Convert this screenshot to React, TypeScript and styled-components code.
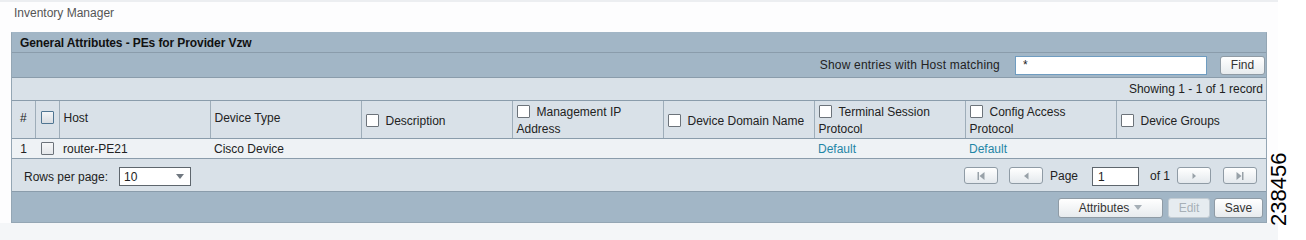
import React from 'react';
import styled, { createGlobalStyle } from 'styled-components';

const GlobalStyle = createGlobalStyle`
	html, body {
		margin: 0;
		padding: 0;
		background: #ffffff;
	}
	body {
		font-family: 'Liberation Sans', Arial, sans-serif;
		font-size: 12px;
		color: #222;
	}
`;

interface Column {
	label: string;
	width: number;
	check?: boolean;
}

const columns: Column[] = [
	{ label: 'Host', width: 151 },
	{ label: 'Device Type', width: 151 },
	{ label: 'Description', width: 151, check: true },
	{ label: 'Management IP Address', width: 151, check: true },
	{ label: 'Device Domain Name', width: 151, check: true },
	{ label: 'Terminal Session Protocol', width: 151, check: true },
	{ label: 'Config Access Protocol', width: 151, check: true },
	{ label: 'Device Groups', width: 150, check: true },
];

const rows = [
	{
		id: 1,
		cells: ['router-PE21', 'Cisco Device', '', '', '', 'Default', 'Default', ''],
	},
];

const PagerIcon: React.FC<{ kind: 'first' | 'prev' | 'next' | 'last' }> = ({ kind }) => {
	const fill = '#98a1a8';
	return (
		<svg width="10" height="10" viewBox="0 0 10 10">
			{kind === 'first' && (
				<>
					<rect x="1.5" y="1" width="1.5" height="8" fill={fill} />
					<path d="M8.5 1 L3.5 5 L8.5 9 Z" fill={fill} />
				</>
			)}
			{kind === 'prev' && <path d="M7.5 1.5 L3 5 L7.5 8.5 Z" fill={fill} />}
			{kind === 'next' && <path d="M3.5 2 L7 5 L3.5 8 Z" fill={fill} />}
			{kind === 'last' && (
				<>
					<path d="M1.5 1 L6.5 5 L1.5 9 Z" fill={fill} />
					<rect x="7" y="1" width="1.5" height="8" fill={fill} />
				</>
			)}
		</svg>
	);
};

const App: React.FC = (): JSX.Element => {
	return (
		<>
			<GlobalStyle />
			<Page>
				<AppTitle>Inventory Manager</AppTitle>
				<Panel>
					<TitleBar>General Attributes - PEs for Provider Vzw</TitleBar>
					<FilterBar>
						<span>Show entries with Host matching</span>
						<SearchInput defaultValue="*" />
						<Button $width={45}>Find</Button>
					</FilterBar>
					<InfoBar>Showing 1 - 1 of 1 record</InfoBar>
					<Grid>
						<colgroup>
							<col style={{ width: 23 }} />
							<col style={{ width: 24 }} />
							{columns.map((c) => (
								<col key={c.label} style={{ width: c.width }} />
							))}
						</colgroup>
						<thead>
							<tr>
								<HeadCell $center>#</HeadCell>
								<HeadCell $center>
									<Check $tone="all" />
								</HeadCell>
								{columns.map((c) => (
									<HeadCell key={c.label} $withCheck={c.check}>
										{c.check && <Check $inline />}
										{c.label}
									</HeadCell>
								))}
							</tr>
						</thead>
						<tbody>
							{rows.map((r) => (
								<tr key={r.id}>
									<BodyCell $center>{r.id}</BodyCell>
									<BodyCell $center>
										<Check $tone="row" />
									</BodyCell>
									{r.cells.map((v, i) => (
										<BodyCell key={i}>
											{v === 'Default' ? <Link href="#">{v}</Link> : v}
										</BodyCell>
									))}
								</tr>
							))}
						</tbody>
					</Grid>
					<PagerBar>
						<RowsPicker>
							<span>Rows per page:</span>
							<Select>
								<span>10</span>
								<Caret />
							</Select>
						</RowsPicker>
						<Pager>
							<PageButton>
								<PagerIcon kind="first" />
							</PageButton>
							<PageButton $gap={11}>
								<PagerIcon kind="prev" />
							</PageButton>
							<PagerText $gap={7}>Page</PagerText>
							<PageInput defaultValue="1" />
							<PagerText $gap={11}>of 1</PagerText>
							<PageButton $gap={7}>
								<PagerIcon kind="next" />
							</PageButton>
							<PageButton $gap={12}>
								<PagerIcon kind="last" />
							</PageButton>
						</Pager>
					</PagerBar>
					<ActionBar>
						<Button $width={105} $tall>
							Attributes <Caret $light />
						</Button>
						<Button $width={42} $tall disabled>
							Edit
						</Button>
						<Button $width={49} $tall>
							Save
						</Button>
					</ActionBar>
				</Panel>
				<Floor />
				<FigureId>238456</FigureId>
			</Page>
		</>
	);
};

const Page = styled.div`
	position: relative;
	width: 1278px;
	height: 240px;
	border-top: 2px solid #eceef1;
	box-sizing: border-box;
	background: #fdfdfe;
	display: flex;
	flex-direction: column;
`;

const AppTitle = styled.div`
	height: 30px;
	padding: 4px 0 0 14px;
	box-sizing: border-box;
	line-height: 15px;
	color: #555;
`;

const Panel = styled.div`
	margin-left: 11px;
	width: 1256px;
	border: 1px solid #94a6b4;
	border-top-color: #a2b6c6;
	box-sizing: border-box;
	background: #a2b6c6;
`;

const TitleBar = styled.div`
	height: 19px;
	padding-left: 8px;
	line-height: 20px;
	font-weight: bold;
	letter-spacing: -0.1px;
	color: #111;
	border-bottom: 1px solid #8a9cab;
`;

const FilterBar = styled.div`
	height: 24px;
	display: flex;
	align-items: center;
	justify-content: flex-end;
	padding-right: 1px;
	border-bottom: 1px solid #8a9cab;
	color: #222;
	span {
		margin-right: 15px;
		letter-spacing: 0.2px;
	}
`;

const SearchInput = styled.input`
	width: 192px;
	height: 19px;
	box-sizing: border-box;
	margin-right: 13px;
	padding: 0 7px;
	border: 1px solid #6f9cc0;
	background: #fff;
	font: 12px 'Liberation Sans', Arial, sans-serif;
	color: #222;
	outline: none;
`;

const Button = styled.button<{ $width: number; $tall?: boolean }>`
	width: ${(p) => p.$width}px;
	height: ${(p) => (p.$tall ? 20 : 19)}px;
	box-sizing: border-box;
	padding: 0;
	display: inline-flex;
	align-items: center;
	justify-content: center;
	gap: 5px;
	border: 1px solid #8f9ba5;
	border-radius: 3px;
	background: linear-gradient(#ffffff, #e7ebee);
	font: 12px 'Liberation Sans', Arial, sans-serif;
	color: #333;
	&:disabled {
		background: #e6ecf0;
		border-color: #c3ccd3;
		color: #a7b0b7;
	}
`;

const InfoBar = styled.div`
	height: 22px;
	line-height: 22px;
	text-align: right;
	padding-right: 3px;
	background: #d9e1e8;
	color: #222;
`;

const Grid = styled.table`
	width: 100%;
	border-collapse: collapse;
	table-layout: fixed;
`;

const HeadCell = styled.th<{ $center?: boolean; $withCheck?: boolean }>`
	height: ${(p) => (p.$withCheck ? 34 : 35)}px;
	padding: ${(p) => (p.$withCheck ? '3px 4px 0' : '0 4px 2px')};
	text-align: ${(p) => (p.$center ? 'center' : 'left')};
	font-weight: normal;
	line-height: 17px;
	color: #222;
	background: #d9e1e8;
	border-top: 1px solid #8a9cab;
	border-bottom: 1px solid #8a9cab;
	border-left: 1px solid #9eadb9;
	&:first-child {
		border-left: none;
	}
`;

const BodyCell = styled.td<{ $center?: boolean }>`
	height: 19px;
	padding: 0 4px;
	text-align: ${(p) => (p.$center ? 'center' : 'left')};
	background: #eef2f5;
	color: #222;
	border-bottom: 1px solid #8a9cab;
	white-space: nowrap;
`;

const Check = styled.span<{ $tone?: 'all' | 'row'; $inline?: boolean }>`
	display: inline-block;
	width: 13px;
	height: 13px;
	box-sizing: border-box;
	vertical-align: -2px;
	margin-right: ${(p) => (p.$inline ? '7px' : '0')};
	border: 1px solid ${(p) => (p.$tone === 'all' ? '#4f7592' : '#6c737a')};
	border-radius: 1px;
	background: ${(p) =>
		p.$tone === 'all'
			? 'linear-gradient(#f3f5f7, #d8dde2)'
			: p.$tone === 'row'
			? 'linear-gradient(#f6f7f8, #e4e7ea)'
			: '#fff'};
`;

const Link = styled.a`
	color: #1f86a6;
	text-decoration: none;
`;

const PagerBar = styled.div`
	height: 32px;
	display: flex;
	align-items: center;
	justify-content: space-between;
	padding: 0 9px 0 12px;
	background: #d9e1e8;
	border-bottom: 1px solid #8a9cab;
`;

const RowsPicker = styled.div`
	display: flex;
	align-items: center;
	gap: 11px;
	padding-top: 3px;
`;

const Select = styled.div`
	width: 72px;
	height: 19px;
	box-sizing: border-box;
	display: flex;
	align-items: center;
	justify-content: space-between;
	padding: 0 6px 0 4px;
	border: 1px solid #5e666d;
	background: #fff;
`;

const Caret = styled.span<{ $light?: boolean }>`
	width: 0;
	height: 0;
	border-left: 4px solid transparent;
	border-right: 4px solid transparent;
	border-top: 5px solid ${(p) => (p.$light ? '#a6afb6' : '#707880')};
`;

const Pager = styled.div`
	display: flex;
	align-items: center;
	padding-top: 1px;
`;

const PageButton = styled.button<{ $gap?: number }>`
	width: 34px;
	height: 17px;
	box-sizing: border-box;
	margin-left: ${(p) => p.$gap ?? 0}px;
	padding: 0;
	display: flex;
	align-items: center;
	justify-content: center;
	border: 1px solid #8f9ba5;
	border-radius: 3px;
	background: linear-gradient(#ffffff, #e4e9ed);
`;

const PagerText = styled.span<{ $gap: number }>`
	margin-left: ${(p) => p.$gap}px;
	color: #222;
`;

const PageInput = styled.input`
	width: 47px;
	height: 19px;
	box-sizing: border-box;
	padding: 0 5px;
	margin: 2px 0 0 14px;
	border: 1px solid #5e666d;
	background: #fff;
	font: 12px 'Liberation Sans', Arial, sans-serif;
	color: #222;
	outline: none;
`;

const ActionBar = styled.div`
	height: 30px;
	display: flex;
	align-items: center;
	justify-content: flex-end;
	gap: 4px;
	padding-right: 3px;
	padding-top: 1px;
	box-sizing: border-box;
	button:first-child {
		margin-right: 1px;
	}
`;

const Floor = styled.div`
	flex: 1;
	background: #f4f6f8;
`;

const FigureId = styled.div`
	position: absolute;
	left: 1268px;
	top: 148px;
	width: 22px;
	height: 78px;
	writing-mode: vertical-rl;
	transform: rotate(180deg);
	font-size: 22px;
	line-height: 22px;
	text-align: center;
	color: #000;
`;

export default App;
